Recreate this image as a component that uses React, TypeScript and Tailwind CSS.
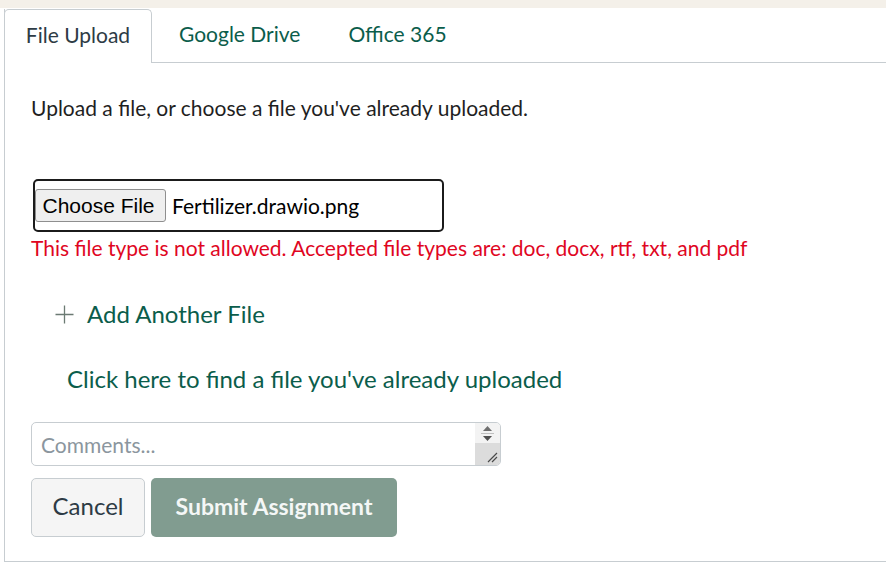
const GREEN = "text-[#0b5d4b]";

function Tabs() {
  return (
    <div className="flex h-[54px] items-stretch border-b border-[#c7cdd1]">
      <div className="-mb-px -ml-px flex w-[148px] items-center justify-center rounded-t-[5px] border border-b-0 border-[#c7cdd1] bg-white pb-[3px] text-[21px] text-[#2d3b45]">
        File Upload
      </div>
      <div className={`flex items-center pb-[3px] pl-[27px] text-[21px] ${GREEN}`}>Google Drive</div>
      <div className={`flex items-center pb-[3px] pl-[48px] text-[21px] ${GREEN}`}>Office 365</div>
    </div>
  );
}

function FileField() {
  return (
    <div className="ml-[2px] flex h-[53px] w-[411px] items-center rounded-[5px] border-2 border-[#1b1b1b]">
      <button
        type="button"
        className="h-[33px] w-[131px] rounded-[3px] border border-[#8f8f8f] bg-[#efefef] pr-[4px] text-[21px] leading-none text-black"
        style={{ fontFamily: '"Liberation Sans", Arial, sans-serif' }}
      >
        Choose File
      </button>
      <span className="pl-[6px] text-[21px] text-black">Fertilizer.drawio.png</span>
    </div>
  );
}

function Comments() {
  return (
    <div className="flex h-[44px] w-[470px] overflow-hidden rounded-[5px] border border-[#c7cdd1] bg-white">
      <textarea
        placeholder="Comments..."
        className="flex-1 resize-none px-[9px] pt-[10px] text-[21px] leading-[1.1] text-[#2d3b45] outline-none placeholder:text-[#8b969e]"
      />
      <div className="flex w-[25px] flex-col">
        <div className="flex h-[21px] flex-col items-center justify-center gap-[2px] border-b border-[#dcdcdc] bg-[#f3f3f3]">
          <svg width="9" height="5" viewBox="0 0 9 5"><path d="M0 5 L4.5 0 L9 5 Z" fill="#6f6f6f" /></svg>
          <div className="h-px w-[13px] bg-[#c0c0c0]" />
          <svg width="9" height="5" viewBox="0 0 9 5"><path d="M0 0 L4.5 5 L9 0 Z" fill="#505050" /></svg>
        </div>
        <div className="flex flex-1 items-end justify-end bg-[#dcdcdc] pb-[2px] pr-[2px]">
          <svg width="12" height="12" viewBox="0 0 12 12">
            <path d="M11 2 L2 11 M11 6 L6 11" stroke="#4a4a4a" strokeWidth="1.2" />
          </svg>
        </div>
      </div>
    </div>
  );
}

export default function App() {
  return (
    <div
      className="h-[574px] w-[886px] overflow-hidden bg-white"
      style={{ fontFamily: 'Lato, "Open Sans", sans-serif' }}
    >
      <div className="h-2 bg-[#f4f0e9]" />
      <div className="ml-[4px] mt-px h-[553px] border-b border-l border-[#c7cdd1]">
        <Tabs />
        <div className="pl-[26px]">
          <p className="mt-[30px] text-[21px] leading-[30px] text-[#1f1f1f]">
            Upload a file, or choose a file you've already uploaded.
          </p>
          <div className="mt-[56px]">
            <FileField />
          </div>
          <p className="mt-[1px] text-[21px] leading-[30px] text-[#e0061f]">
            This file type is not allowed. Accepted file types are: doc, docx, rtf, txt, and pdf
          </p>
          <div className={`mt-[35px] flex h-[32px] items-center pl-[24px] text-[24px] ${GREEN}`}>
            <svg width="19" height="19" viewBox="0 0 19 19">
              <path d="M9.5 0.5 V18.5 M0.5 9.5 H18.5" stroke="#6b7a73" strokeWidth="1.3" />
            </svg>
            <span className="pl-[13px]">Add Another File</span>
          </div>
          <div className={`mt-[33px] h-[32px] pl-[36px] text-[24px] leading-[32px] ${GREEN}`}>
            Click here to find a file you've already uploaded
          </div>
          <div className="mt-[27px]">
            <Comments />
          </div>
          <div className="mt-[12px] flex gap-[6px]">
            <button
              type="button"
              className="h-[59px] w-[114px] rounded-[5px] border border-[#c7cdd1] bg-[#f5f5f5] pb-[3px] text-[24px] text-[#2d3b45]"
            >
              Cancel
            </button>
            <button
              type="button"
              className="h-[59px] w-[246px] rounded-[5px] bg-[#819c90] pb-[3px] text-[23px] font-bold text-[#f4f7f6]"
            >
              Submit Assignment
            </button>
          </div>
        </div>
      </div>
    </div>
  );
}
